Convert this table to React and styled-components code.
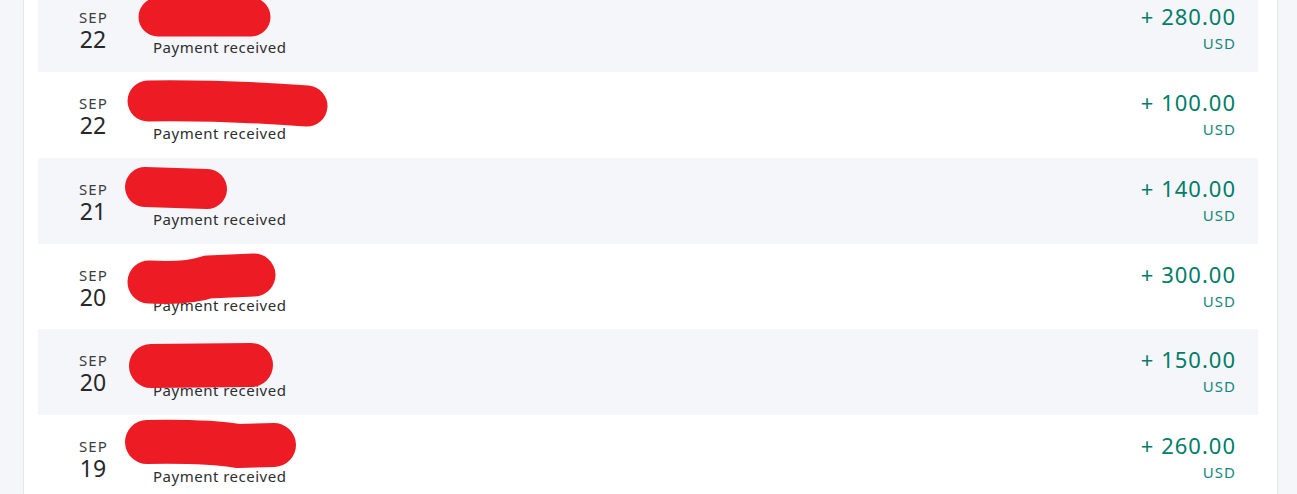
import React from "react";
import styled, { createGlobalStyle } from "styled-components";

const GlobalStyle = createGlobalStyle`
  html, body {
    margin: 0;
    padding: 0;
    background: #f5f6fa;
    font-family: "Noto Sans", "Open Sans", sans-serif;
    overflow: hidden;
  }
`;

// redaction strokes: points relative to the row, w = brush width
const payments = [
  { month: "SEP", day: "22", amount: "280.00", blob: { d: "M120 31 L213 31", w: 39 } },
  { month: "SEP", day: "22", amount: "100.00", blob: { d: "M110 29 Q190 28 269 34", w: 41 } },
  { month: "SEP", day: "21", amount: "140.00", blob: { d: "M107 29 L169 31", w: 40 } },
  { month: "SEP", day: "20", amount: "300.00", blob: { d: "M111 38 Q150 40 170 33 L216 31", w: 43 } },
  { month: "SEP", day: "20", amount: "150.00", blob: { d: "M113 37 L213 36", w: 44 } },
  { month: "SEP", day: "19", amount: "260.00", blob: { d: "M109 27 Q170 26 200 31 L236 30", w: 44 } },
];

function Activity() {
  return (
    <Panel>
      <List>
        {payments.map((p, i) => (
          <Row key={i} $shaded={i % 2 === 0}>
            <DateCol>
              <Month>{p.month}</Month>
              <Day>{p.day}</Day>
            </DateCol>
            <Details>
              <NameSlot />
              <Status>Payment received</Status>
            </Details>
            <AmountCol>
              <Amount>+ {p.amount}</Amount>
              <Currency>USD</Currency>
            </AmountCol>
            <Redaction>
              <path
                d={p.blob.d}
                stroke="#ed1c24"
                strokeWidth={p.blob.w}
                strokeLinecap="round"
                strokeLinejoin="round"
                fill="none"
              />
            </Redaction>
          </Row>
        ))}
      </List>
    </Panel>
  );
}

export default function App() {
  return (
    <>
      <GlobalStyle />
      <Activity />
    </>
  );
}

const Panel = styled.div`
  box-sizing: border-box;
  margin-left: 23px;
  width: 1255px;
  min-height: 494px;
  background: #fff;
  border-left: 1px solid #e4e6ea;
  border-right: 1px solid #e4e6ea;
  padding: 0 19px 0 14px;
`;

const List = styled.div`
  margin-top: -13.75px;
  display: flex;
  flex-direction: column;
`;

const Row = styled.div`
  position: relative;
  display: flex;
  align-items: flex-start;
  height: 85.75px;
  background: ${(p) => (p.$shaded ? "#f5f6fa" : "#fff")};
  color: #2c2e2f;
`;

const DateCol = styled.div`
  width: 110px;
  padding-top: 24px;
  display: flex;
  flex-direction: column;
  align-items: center;
`;

const Month = styled.span`
  font-size: 15px;
  line-height: 15px;
  letter-spacing: 1.1px;
  padding-left: 1px;
  color: #3b3d40;
`;

const Day = styled.span`
  font-size: 23px;
  line-height: 28px;
  color: #26282a;
`;

const Details = styled.div`
  flex: 1;
  padding-top: 24px;
  padding-left: 5px;
  display: flex;
  flex-direction: column;
`;

const NameSlot = styled.div`
  height: 29px;
`;

const Status = styled.span`
  font-size: 15px;
  line-height: 16px;
  letter-spacing: 0.5px;
  color: #2c2e2f;
`;

const AmountCol = styled.div`
  padding-top: 18px;
  padding-right: 23px;
  display: flex;
  flex-direction: column;
  align-items: flex-end;
`;

const Amount = styled.span`
  font-size: 22px;
  line-height: 24px;
  letter-spacing: 1px;
  margin-right: -1px;
  color: #007d68;
`;

const Currency = styled.span`
  margin-top: 7px;
  font-size: 15px;
  line-height: 16px;
  letter-spacing: 1px;
  margin-right: -1px;
  color: #13877a;
`;

const Redaction = styled.svg`
  position: absolute;
  left: 0;
  top: 0;
  width: 100%;
  height: 100%;
  overflow: visible;
  pointer-events: none;
`;
